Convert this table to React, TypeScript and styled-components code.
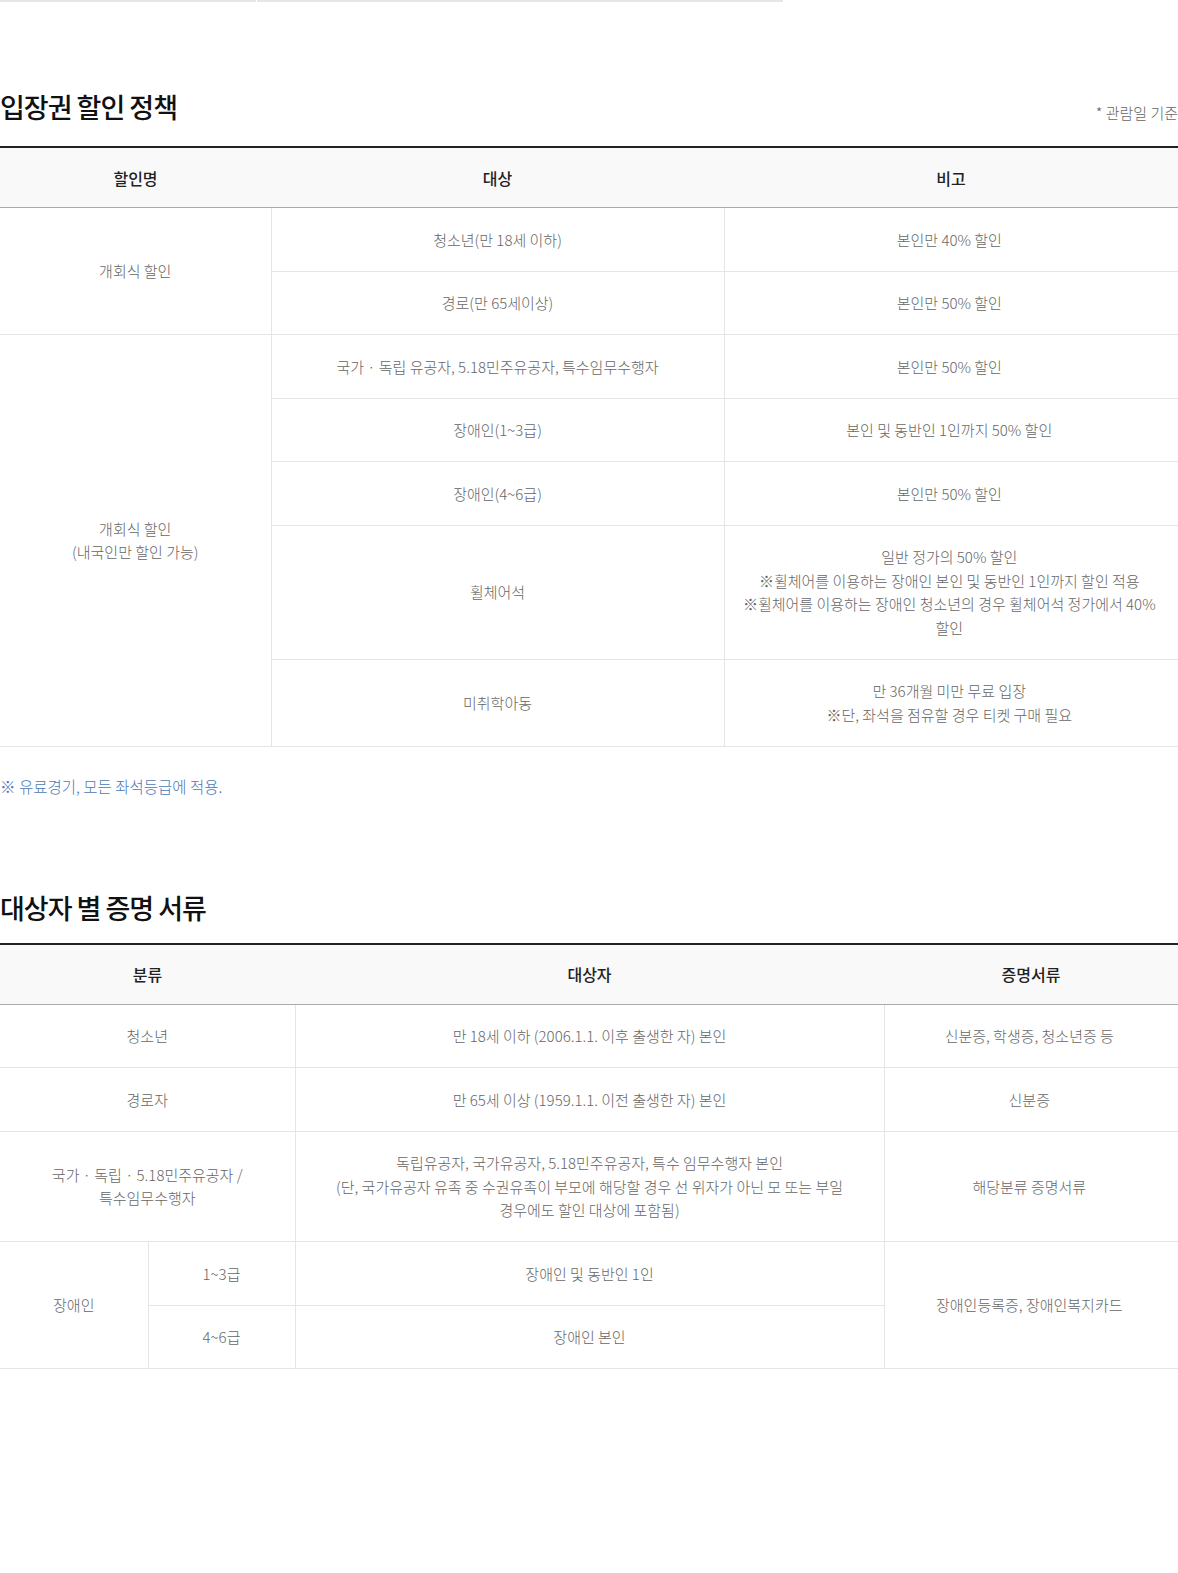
import React from "react";
import styled, { createGlobalStyle } from "styled-components";

const Global = createGlobalStyle`
  html, body { margin: 0; padding: 0; background: #fff; }
  body {
    font-family: "Noto Sans CJK KR", "Noto Sans", sans-serif;
    color: #666;
    overflow-x: hidden;
  }
  * { box-sizing: border-box; }
`;

const Page = styled.div`
  width: 1178px;
  overflow: hidden;
`;

const TopTabs = styled.div`
  display: flex;
  gap: 1px;
  width: 783px;
  height: 2px;
`;

const TabLine = styled.div<{ $w: number }>`
  flex: 0 0 ${(p) => p.$w}px;
  background: #e6e6e6;
`;

const Section = styled.section<{ $top: number }>`
  padding-top: ${(p) => p.$top}px;
`;

const HeadRow = styled.div<{ $gap: number }>`
  display: flex;
  justify-content: space-between;
  align-items: flex-end;
  margin-bottom: ${(p) => p.$gap}px;
`;

const Title = styled.h2`
  margin: 0;
  font-size: 27px;
  line-height: 36px;
  font-weight: 500;
  color: #111;
  letter-spacing: -1px;
`;

const Aside = styled.span`
  font-size: 15px;
  line-height: 20px;
  color: #666;
  font-weight: 300;
  white-space: nowrap;
  margin-bottom: 2px;
`;

const Table = styled.table`
  width: 100%;
  border-collapse: collapse;
  table-layout: fixed;
  border-top: 2px solid #222;
`;

const Th = styled.th`
  background: #f9f9f9;
  border-bottom: 1px solid #aaa;
  padding: 17.5px 10px;
  font-size: 16px;
  line-height: 24px;
  font-weight: 500;
  color: #222;
  text-align: center;
`;

const Td = styled.td<{ $last?: boolean }>`
  border-bottom: 1px solid #e5e5e5;
  border-right: ${(p) => (p.$last ? "none" : "1px solid #e5e5e5")};
  padding: 19.5px ${(p) => (p.$last ? "16px" : "12px")} 19.5px 12px;
  font-size: 15px;
  line-height: 23.5px;
  font-weight: 300;
  color: #666;
  text-align: center;
  vertical-align: middle;
  word-break: keep-all;
`;

const Note = styled.p`
  margin: 28px 0 0;
  font-size: 15.5px;
  line-height: 22px;
  font-weight: 300;
  color: #4a78b8;
`;

const Spacer = styled.div`
  height: 200px;
`;

export default function App() {
  return (
    <Page>
      <Global />
      <TopTabs>
        <TabLine $w={256} />
        <TabLine $w={526} />
      </TopTabs>

      <Section $top={87}>
        <HeadRow $gap={21}>
          <Title>입장권 할인 정책</Title>
          <Aside>* 관람일 기준</Aside>
        </HeadRow>
        <Table>
          <colgroup>
            <col style={{ width: 271 }} />
            <col style={{ width: 453 }} />
            <col />
          </colgroup>
          <thead>
            <tr>
              <Th>할인명</Th>
              <Th>대상</Th>
              <Th>비고</Th>
            </tr>
          </thead>
          <tbody>
            <tr>
              <Td rowSpan={2}>개회식 할인</Td>
              <Td>청소년(만 18세 이하)</Td>
              <Td $last>본인만 40% 할인</Td>
            </tr>
            <tr>
              <Td>경로(만 65세이상)</Td>
              <Td $last>본인만 50% 할인</Td>
            </tr>
            <tr>
              <Td rowSpan={5}>
                개회식 할인
                <br />
                (내국인만 할인 가능)
              </Td>
              <Td>국가 · 독립 유공자, 5.18민주유공자, 특수임무수행자</Td>
              <Td $last>본인만 50% 할인</Td>
            </tr>
            <tr>
              <Td>장애인(1~3급)</Td>
              <Td $last>본인 및 동반인 1인까지 50% 할인</Td>
            </tr>
            <tr>
              <Td>장애인(4~6급)</Td>
              <Td $last>본인만 50% 할인</Td>
            </tr>
            <tr>
              <Td>휠체어석</Td>
              <Td $last>
                일반 정가의 50% 할인
                <br />
                ※휠체어를 이용하는 장애인 본인 및 동반인 1인까지 할인 적용
                <br />
                ※휠체어를 이용하는 장애인 청소년의 경우 휠체어석 정가에서 40% 할인
              </Td>
            </tr>
            <tr>
              <Td>미취학아동</Td>
              <Td $last>
                만 36개월 미만 무료 입장
                <br />
                ※단, 좌석을 점유할 경우 티켓 구매 필요
              </Td>
            </tr>
          </tbody>
        </Table>
        <Note>※ 유료경기, 모든 좌석등급에 적용.</Note>
      </Section>

      <Section $top={93}>
        <HeadRow $gap={17}>
          <Title>대상자 별 증명 서류</Title>
        </HeadRow>
        <Table>
          <colgroup>
            <col style={{ width: 148 }} />
            <col style={{ width: 147 }} />
            <col style={{ width: 589 }} />
            <col />
          </colgroup>
          <thead>
            <tr>
              <Th colSpan={2}>분류</Th>
              <Th>대상자</Th>
              <Th>증명서류</Th>
            </tr>
          </thead>
          <tbody>
            <tr>
              <Td colSpan={2}>청소년</Td>
              <Td>만 18세 이하 (2006.1.1. 이후 출생한 자) 본인</Td>
              <Td $last>신분증, 학생증, 청소년증 등</Td>
            </tr>
            <tr>
              <Td colSpan={2}>경로자</Td>
              <Td>만 65세 이상 (1959.1.1. 이전 출생한 자) 본인</Td>
              <Td $last>신분증</Td>
            </tr>
            <tr>
              <Td colSpan={2}>
                국가 · 독립 · 5.18민주유공자 /
                <br />
                특수임무수행자
              </Td>
              <Td>
                독립유공자, 국가유공자, 5.18민주유공자, 특수 임무수행자 본인
                <br />
                (단, 국가유공자 유족 중 수권유족이 부모에 해당할 경우 선 위자가 아닌 모 또는 부일 경우에도 할인 대상에 포함됨)
              </Td>
              <Td $last>해당분류 증명서류</Td>
            </tr>
            <tr>
              <Td rowSpan={2}>장애인</Td>
              <Td>1~3급</Td>
              <Td>장애인 및 동반인 1인</Td>
              <Td $last rowSpan={2}>장애인등록증, 장애인복지카드</Td>
            </tr>
            <tr>
              <Td>4~6급</Td>
              <Td>장애인 본인</Td>
            </tr>
          </tbody>
        </Table>
      </Section>
      <Spacer />
    </Page>
  );
}
